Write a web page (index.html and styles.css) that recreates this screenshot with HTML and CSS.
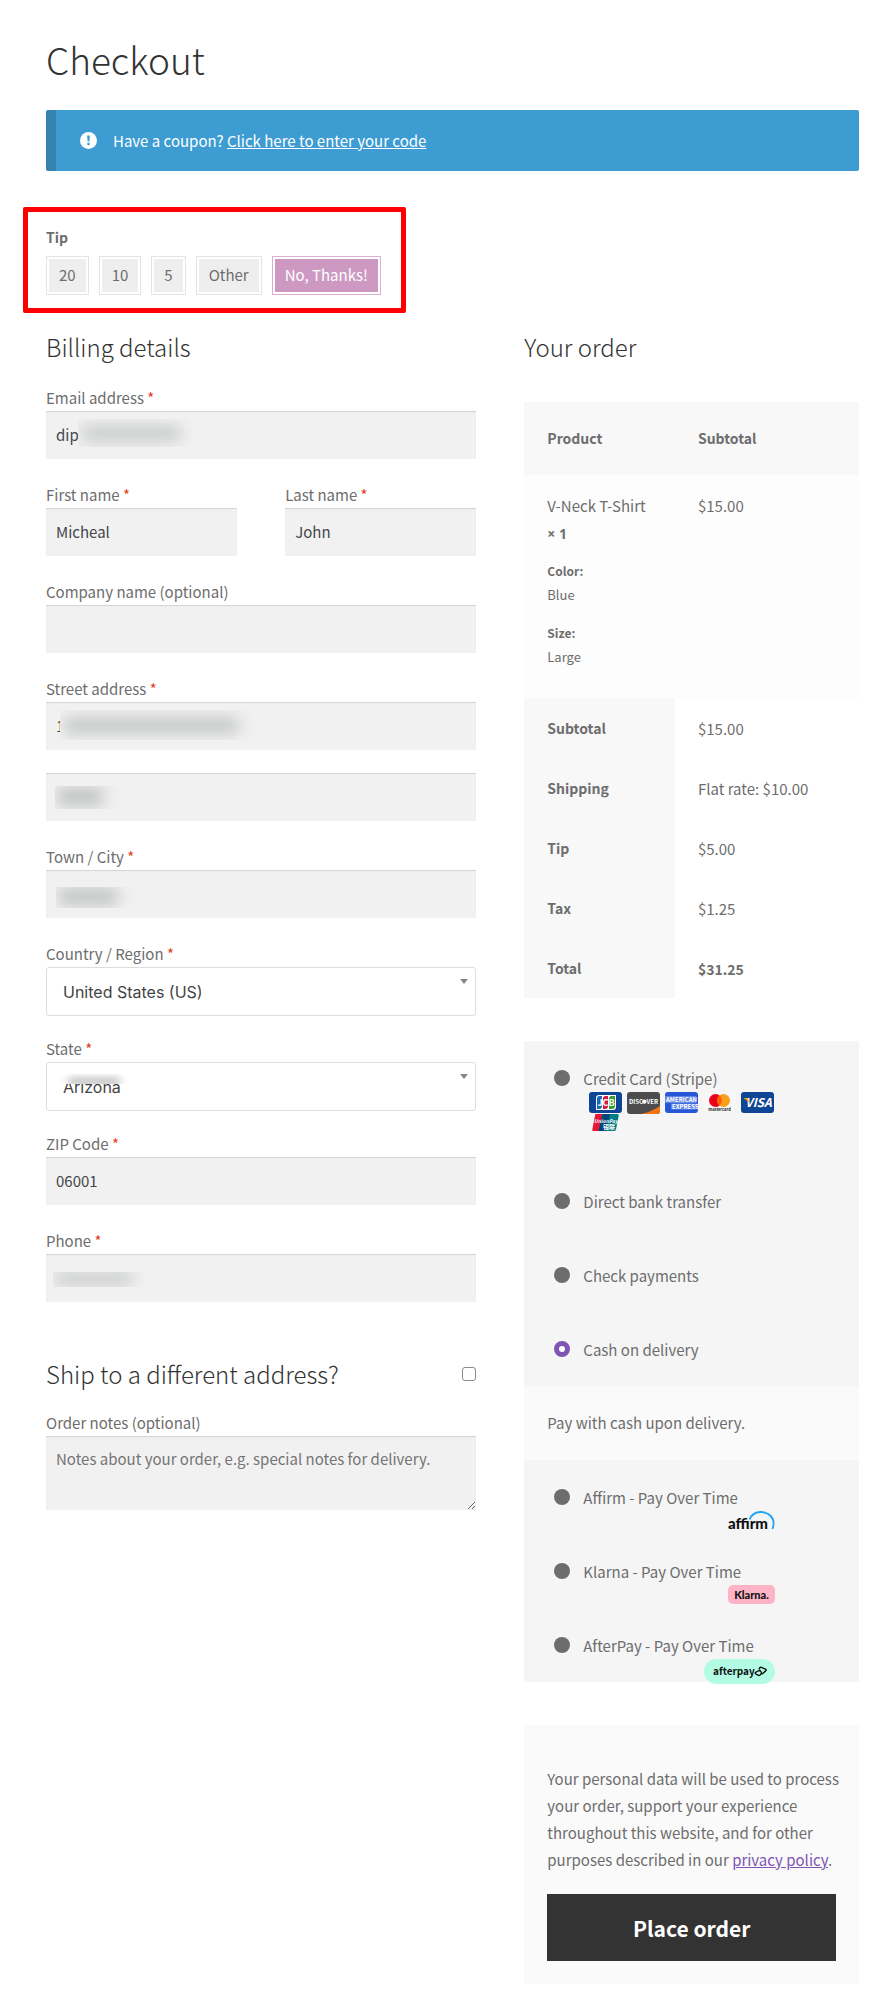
FILE: index.html
```html
<!DOCTYPE html>
<html lang="en">
<head>
    <meta charset="UTF-8">
    <meta name="viewport" content="width=device-width, initial-scale=1.0">
    <title>Checkout</title>
    <link rel="stylesheet" href="styles.css">
</head>
<body>
    <main class="page">
        <h1>Checkout</h1>

        <div class="notice">
            <svg class="notice-icon" viewBox="0 0 17 17" aria-hidden="true">
                <circle cx="8.5" cy="8.5" r="8.5" fill="#fff"/>
                <path d="M7.1 3.5h2.8l-.5 6H7.6z" fill="#3d9cd2"/>
                <rect x="7.3" y="10.8" width="2.4" height="2.4" rx=".6" fill="#3d9cd2"/>
            </svg>
            <p>Have a coupon? <a href="#">Click here to enter your code</a></p>
        </div>

        <section class="tip">
            <h2 class="tip-title">Tip</h2>
            <div class="tip-options">
                <button type="button" class="tip-button">20</button>
                <button type="button" class="tip-button">10</button>
                <button type="button" class="tip-button">5</button>
                <button type="button" class="tip-button">Other</button>
                <button type="button" class="tip-button active">No, Thanks!</button>
            </div>
        </section>

        <form class="checkout">
            <div class="customer">
                <h3>Billing details</h3>
                <div class="field">
                    <label for="email">Email address <span class="required">*</span></label>
                    <div class="control">
                        <input type="text" id="email" value="dip">
                        <span class="mask mask-email"></span>
                    </div>
                </div>
                <div class="field-row">
                    <div class="field">
                        <label for="first-name">First name <span class="required">*</span></label>
                        <input type="text" id="first-name" value="Micheal">
                    </div>
                    <div class="field">
                        <label for="last-name">Last name <span class="required">*</span></label>
                        <input type="text" id="last-name" value="John">
                    </div>
                </div>
                <div class="field">
                    <label for="company">Company name (optional)</label>
                    <input type="text" id="company">
                </div>
                <div class="field">
                    <label for="street">Street address <span class="required">*</span></label>
                    <div class="control">
                        <input type="text" id="street" value="1">
                        <span class="mask mask-street"></span>
                    </div>
                </div>
                <div class="field">
                    <div class="control">
                        <input type="text" id="street-2" aria-label="Apartment, suite, unit">
                        <span class="mask mask-unit"></span>
                    </div>
                </div>
                <div class="field">
                    <label for="city">Town / City <span class="required">*</span></label>
                    <div class="control">
                        <input type="text" id="city">
                        <span class="mask mask-city"></span>
                    </div>
                </div>
                <div class="field select-field">
                    <label for="country">Country / Region <span class="required">*</span></label>
                    <div class="control select">
                        <select id="country"><option>United States (US)</option></select>
                    </div>
                </div>
                <div class="field select-field">
                    <label for="state">State <span class="required">*</span></label>
                    <div class="control select">
                        <select id="state"><option>Arizona</option></select>
                        <span class="mask mask-state"></span>
                    </div>
                </div>
                <div class="field">
                    <label for="zip">ZIP Code <span class="required">*</span></label>
                    <input type="text" id="zip" value="06001">
                </div>
                <div class="field">
                    <label for="phone">Phone <span class="required">*</span></label>
                    <div class="control">
                        <input type="text" id="phone">
                        <span class="mask mask-phone"></span>
                    </div>
                </div>

                <h3 class="ship-title">
                    <label for="ship">Ship to a different address?</label>
                    <input type="checkbox" id="ship">
                </h3>
                <div class="field">
                    <label for="notes">Order notes (optional)</label>
                    <textarea id="notes" placeholder="Notes about your order, e.g. special notes for delivery."></textarea>
                </div>
            </div>

            <div class="order">
                <h3>Your order</h3>
                <table>
                    <thead>
                        <tr><th>Product</th><th>Subtotal</th></tr>
                    </thead>
                    <tbody>
                        <tr>
                            <td>
                                V-Neck T-Shirt <strong class="quantity">×&nbsp;1</strong>
                                <dl>
                                    <dt>Color:</dt>
                                    <dd>Blue</dd>
                                    <dt>Size:</dt>
                                    <dd>Large</dd>
                                </dl>
                            </td>
                            <td>$15.00</td>
                        </tr>
                    </tbody>
                    <tfoot>
                        <tr><th>Subtotal</th><td>$15.00</td></tr>
                        <tr><th>Shipping</th><td>Flat rate: $10.00</td></tr>
                        <tr><th>Tip</th><td>$5.00</td></tr>
                        <tr><th>Tax</th><td>$1.25</td></tr>
                        <tr><th>Total</th><td><strong>$31.25</strong></td></tr>
                    </tfoot>
                </table>

                <ul class="payments">
                    <li class="payment cards-payment">
                        <input type="radio" name="payment" id="pay-card">
                        <label for="pay-card">Credit Card (Stripe)</label>
                        <div class="cards">
                            <svg class="card" viewBox="0 0 33 22" role="img" aria-label="JCB">
                                <rect width="33" height="21" rx="3" fill="#0e4595"/>
                                <path d="M10 3h17v12q0 3-3 3H7V6q0-3 3-3z" fill="#fff"/>
                                <path d="M10.500 4H13v10q0 3-3 3H8V6.500q0-2.500 2.500-2.500z" fill="#1669b5"/>
                                <path d="M16.500 4H19v10q0 3-3 3h-2V6.500q0-2.500 2.500-2.500z" fill="#d7193f"/>
                                <path d="M22.500 4H26v10q0 3-3 3h-3V6.500q0-2.500 2.500-2.500z" fill="#3a9c35"/>
                                <text x="17" y="13.500" text-anchor="middle" font-size="9" font-weight="700" fill="#fff">JCB</text>
                            </svg>
                            <svg class="card" viewBox="0 0 33 22" role="img" aria-label="Discover">
                                <rect width="33" height="22" rx="3" fill="#4d4d4d"/>
                                <path d="M14 22Q26 19 33 14v5q0 3-3 3z" fill="#f47216"/>
                                <text x="2" y="11.700" font-size="6" font-weight="700" fill="#fff">DISC</text>
                                <circle cx="17.300" cy="9.600" r="2.200" fill="#fff"/>
                                <text x="19.500" y="11.700" font-size="6" font-weight="700" fill="#fff">VER</text>
                            </svg>
                            <svg class="card" viewBox="0 0 33 22" role="img" aria-label="American Express">
                                <rect width="33" height="21" rx="3" fill="#2557d6"/>
                                <rect y="4" width="31" height="7" fill="#9db5f3" opacity=".5"/>
                                <rect x="6" y="11.500" width="27" height="6" fill="#9db5f3" opacity=".5"/>
                                <text x="1" y="9.800" font-size="6" font-weight="700" fill="#fff">AMERICAN</text>
                                <text x="7" y="16.800" font-size="6" font-weight="700" fill="#fff">EXPRESS</text>
                            </svg>
                            <svg class="card" viewBox="0 0 33 22" role="img" aria-label="Mastercard">
                                <rect width="33" height="21" rx="3" fill="#f7f7f7"/>
                                <circle cx="12.500" cy="8.500" r="6.500" fill="#eb001b"/>
                                <circle cx="20.500" cy="8.500" r="6.500" fill="#f79e1b"/>
                                <path d="M16.500 3.400a6.500 6.500 0 0 1 0 10.200 6.500 6.500 0 0 1 0-10.200z" fill="#ff5f00"/>
                                <text x="16.500" y="19" text-anchor="middle" font-size="4" font-weight="700" fill="#222">mastercard</text>
                            </svg>
                            <svg class="card" viewBox="0 0 33 22" role="img" aria-label="Visa">
                                <rect width="33" height="21" rx="3" fill="#0e4595"/>
                                <text x="17.500" y="15" text-anchor="middle" font-size="12" font-weight="700" font-style="italic" fill="#fff">VISA</text>
                                <path d="M2.500 6h3q1.500 0 2 2l.6 3Q6 8 2.500 6z" fill="#f2ae14"/>
                            </svg>
                            <svg class="card unionpay" viewBox="0 0 33 18" role="img" aria-label="UnionPay">
                                <path d="M6.500 0H14l-4 17H4.500Q3 17 3.300 15.500L6 1.500Q6 0 6.500 0z" fill="#e21836"/>
                                <path d="M13.500 0H22l-4 17H9.500z" fill="#00447c"/>
                                <path d="M21 0h7.500Q30 0 29.700 1.500L27 15.500Q26.700 17 25 17h-8z" fill="#007b84"/>
                                <text x="17" y="8.500" text-anchor="middle" font-size="5" font-weight="700" font-style="italic" fill="#fff">UnionPay</text>
                                <text x="20" y="14.500" text-anchor="middle" font-size="6" font-weight="700" fill="#fff">银联</text>
                            </svg>
                        </div>
                    </li>
                    <li class="payment">
                        <input type="radio" name="payment" id="pay-bank">
                        <label for="pay-bank">Direct bank transfer</label>
                    </li>
                    <li class="payment">
                        <input type="radio" name="payment" id="pay-check">
                        <label for="pay-check">Check payments</label>
                    </li>
                    <li class="payment">
                        <input type="radio" name="payment" id="pay-cash" checked>
                        <label for="pay-cash">Cash on delivery</label>
                    </li>
                    <li class="payment-note">Pay with cash upon delivery.</li>
                    <li class="payment">
                        <input type="radio" name="payment" id="pay-affirm">
                        <label for="pay-affirm">Affirm - Pay Over Time</label>
                        <svg class="pay-logo" width="47" height="23" viewBox="0 0 47 23" role="img" aria-label="Affirm">
                            <path d="M21.500 8.500A12.200 12.200 0 0 1 33 1c8 0 13 6 12.600 12q-.1 2.600-1.200 5" fill="none" stroke="#22a5f0" stroke-width="1.800"/>
                            <text class="logo-text" x="0" y="18" font-size="15">affirm</text>
                        </svg>
                    </li>
                    <li class="payment">
                        <input type="radio" name="payment" id="pay-klarna">
                        <label for="pay-klarna">Klarna - Pay Over Time</label>
                        <svg class="pay-logo" width="47" height="19" viewBox="0 0 47 19" role="img" aria-label="Klarna">
                            <rect width="47" height="19" rx="5" fill="#ffb3c7"/>
                            <text class="logo-text" x="23.500" y="13.500" text-anchor="middle" font-size="11">Klarna.</text>
                        </svg>
                    </li>
                    <li class="payment">
                        <input type="radio" name="payment" id="pay-afterpay">
                        <label for="pay-afterpay">AfterPay - Pay Over Time</label>
                        <svg class="pay-logo" width="71" height="25" viewBox="0 0 71 25" role="img" aria-label="Afterpay">
                            <rect width="71" height="25" rx="12.500" fill="#b2fce4"/>
                            <text class="logo-text after-text" x="9" y="15.500" font-size="10">afterpay</text>
                            <path d="M54.500 16.300l-2.500-1.200q-1.800-1 0-2l3-1.600q1.300-.6 1.300.8v.7M57.500 12.500l-.2 1.600q0 1.200 1.200.6l3.200-2.800q1-1-.3-1.800l-4-1.700q-1.200-.3-1.800.6l-.7 1M54.500 16.300q1.200.5 2-.6l.6-1" fill="none" stroke="#111" stroke-width="1.400" stroke-linejoin="round"/>
                        </svg>
                    </li>
                </ul>

                <div class="place-order">
                    <p>Your personal data will be used to process your order, support your experience throughout this website, and for other purposes described in our <a href="#">privacy policy</a>.</p>
                    <button type="submit">Place order</button>
                </div>
            </div>
        </form>
    </main>
</body>
</html>
```

FILE: styles.css
```css
* {
    box-sizing: border-box;
    margin: 0;
    padding: 0;
}

body {
    font-family: "Noto Sans CJK SC", "Noto Sans", sans-serif;
    font-size: 15px;
    line-height: 27px;
    color: #6d6d6d;
    background-color: #fff;
}
.page {
    padding: 32px 29px 13px 46px;
}
h1 {
    font-size: 37px;
    line-height: 54px;
    font-weight: 300;
    color: #333;
    margin-bottom: 24px;
}
h3 {
    font-size: 24px;
    line-height: 32px;
    font-weight: 300;
    color: #333;
}

.notice {
    display: flex;
    align-items: center;
    gap: 16px;
    min-height: 61px;
    padding: 0 24px;
    border-left: 10px solid #3583b1;
    border-radius: 2px;
    background-color: #3d9cd2;
    color: #fff;
}
.notice-icon {
    width: 17px;
    height: 17px;
}
.notice a {
    color: #fff;
}

.tip {
    width: fit-content;
    margin: 36px 0 18px -23px;
    padding: 12px 20px 13px 18px;
    border: 5px solid #f00;
    border-radius: 2px;
}
.tip-title {
    font-size: 14px;
    font-weight: 700;
    line-height: 27px;
    margin-bottom: 5px;
}
.tip-options {
    display: flex;
    gap: 10px;
}
.tip-button {
    height: 39px;
    padding: 0 12px 2px;
    border: 1px solid #e4e4e4;
    background-color: #eee;
    box-shadow: inset 0 0 0 2px #fff;
    color: #6d6d6d;
    font-family: inherit;
    font-size: 15px;
}
.tip-button.active {
    border-color: #dcaed3;
    background-color: #cd99c2;
    color: #fff;
}

.checkout {
    display: grid;
    grid-template-columns: 9fr 7fr;
    gap: 48px;
}
.customer h3 {
    margin-bottom: 22px;
}
.field {
    margin-bottom: 23px;
}
.select-field {
    margin-bottom: 20px;
}
.field-row {
    display: grid;
    grid-template-columns: 1fr 1fr;
    gap: 48px;
}
.field label {
    display: block;
    line-height: 26px;
}
.required {
    color: #e2401c;
}
.control {
    position: relative;
}
input[type="text"],
textarea {
    display: block;
    width: 100%;
    height: 48px;
    padding: 0 10px 2px;
    border: none;
    background-color: #f1f1f1;
    box-shadow: inset 0 1px 1px rgba(0, 0, 0, 0.125);
    color: #43454b;
    font-family: inherit;
    font-size: 15px;
}
textarea {
    height: 74px;
    padding: 10px;
    line-height: 26px;
}
textarea::placeholder {
    color: #757575;
}
select {
    display: block;
    width: 100%;
    height: 49px;
    padding: 0 16px;
    border: 1px solid #ddd;
    border-radius: 3px;
    background-color: #fff;
    color: #444;
    font-family: Inter, "Liberation Sans", sans-serif;
    font-size: 16px;
    appearance: none;
}
.select::after {
    content: "";
    position: absolute;
    top: 12px;
    right: 8px;
    border: 4px solid transparent;
    border-top: 5px solid #888;
    border-bottom: 0;
}

/* blurred private values */
.mask {
    position: absolute;
    overflow: hidden;
    background-color: #f1f1f1;
}
.mask::before {
    content: "";
    position: absolute;
    inset: 8px 28px 7px 4px;
    background-color: #c0c2c2;
    filter: blur(8px);
}
.mask-email {
    top: 8px;
    left: 32px;
    width: 130px;
    height: 28px;
}
.mask-street {
    top: 8px;
    left: 14px;
    width: 206px;
    height: 30px;
}
.mask-unit {
    top: 13px;
    left: 9px;
    width: 68px;
    height: 23px;
}
.mask-city {
    top: 17px;
    left: 10px;
    width: 82px;
    height: 21px;
}
.mask-phone {
    top: 18px;
    left: 7px;
    width: 100px;
    height: 15px;
}
.mask-unit::before,
.mask-city::before,
.mask-phone::before {
    inset: 1px 20px 3px 2px;
}
.mask-state {
    top: 12px;
    left: 14px;
    width: 80px;
    height: 10px;
    background-color: #fff;
}
.mask-state::before {
    inset: 5px 20px 0 8px;
    background-color: #999;
    filter: blur(4px);
}

.customer .ship-title {
    display: flex;
    justify-content: space-between;
    align-items: center;
    margin: 56px 0 20px;
}
.ship-title input {
    width: 14px;
    height: 14px;
    border: 1px solid #8a8a8a;
    border-radius: 3px;
    background-color: #fff;
    appearance: none;
}

.order h3 {
    margin-bottom: 39px;
}
table {
    width: 100%;
    table-layout: fixed;
    border-collapse: collapse;
    text-align: left;
    margin-bottom: 43px;
}
th,
td {
    padding: 17px 0 16px 23px;
    vertical-align: top;
}
th {
    font-size: 14px;
}
th:first-child {
    width: 45%;
}
thead th {
    padding: 23px;
    background-color: #f8f8f8;
}
tbody td {
    padding-bottom: 29px;
    background-color: #fdfdfd;
}
tbody td:first-child {
    padding-right: 24px;
}
tfoot th {
    background-color: #f8f8f8;
}
tfoot strong {
    font-size: 14px;
    line-height: 1;
}
.quantity {
    font-family: "Open Sans", sans-serif;
    font-size: 14px;
    line-height: 1;
}
dl {
    margin-top: 13px;
    font-size: 12px;
    line-height: 24px;
}
dt {
    font-weight: 700;
}
dd {
    font-size: 13px;
}
dd + dt {
    margin-top: 14px;
}

.payments {
    list-style: none;
    background-color: #f5f5f5;
    margin-bottom: 43px;
}
.payment {
    display: grid;
    grid-template-columns: 16px 192px;
    column-gap: 13px;
    padding: 24px 0 23px 30px;
}
.payment input {
    width: 16px;
    height: 16px;
    margin-top: 5px;
    border-radius: 50%;
    background-color: #6d6d6d;
    appearance: none;
}
.payment input:checked {
    border: 5px solid #7f54b3;
    background-color: #fff;
}
.cards-payment {
    padding-bottom: 32px;
}
.cards {
    grid-column: 2;
    display: flex;
    flex-wrap: wrap;
    gap: 0 5px;
    padding-left: 6px;
}
.card {
    width: 33px;
    height: 22px;
    font-family: "Noto Sans CJK SC", sans-serif;
}
.unionpay {
    height: 18px;
}
.pay-logo {
    grid-column: 2;
    justify-self: end;
    margin-bottom: -26px;
}
.logo-text {
    font-family: Lato, sans-serif;
    font-weight: 900;
    fill: #111;
}
.after-text {
    font-family: "Noto Sans CJK SC", sans-serif;
    font-weight: 700;
}
.payment-note {
    padding: 23px 23px 24px;
    background-color: #fafafa;
}

.place-order {
    padding: 40px 23px 23px;
    background-color: #fafafa;
}
/* the copy runs a little wider than the button */
.place-order p {
    margin: 0 -8px 21px 0;
}
.place-order a {
    color: #7f54b3;
}
.place-order button {
    width: 100%;
    height: 67px;
    border: none;
    background-color: #333;
    color: #fff;
    font-family: inherit;
    font-size: 21px;
    font-weight: 700;
    cursor: pointer;
}
```
